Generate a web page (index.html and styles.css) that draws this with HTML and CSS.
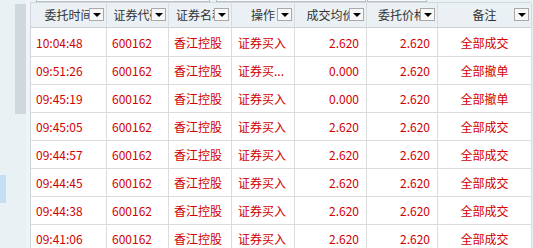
FILE: index.html
```html
<!DOCTYPE html>
<html>
<head>
<meta charset="utf-8">
<link rel="stylesheet" href="styles.css">
</head>
<body>
<div class="app">
  <div class="side">
    <div class="thumb"></div>
    <div class="marker"></div>
  </div>
  <div class="gutter"></div>
  <div class="main">
    <div class="toolbar">
      <div class="tb tb1"></div>
      <div class="tb tb2"></div>
      <div class="tb tb3"></div>
    </div>
    <div class="grid">
      <div class="h">委托时间<span class="dd"></span></div>
      <div class="h">证券代码<span class="dd"></span></div>
      <div class="h">证券名称<span class="dd"></span></div>
      <div class="h">操作<span class="dd"></span></div>
      <div class="h">成交均价<span class="dd"></span></div>
      <div class="h">委托价格<span class="dd"></span></div>
      <div class="h">备注<span class="dd"></span></div>

      <div class="c">10:04:48</div><div class="c">600162</div><div class="c">香江控股</div><div class="c op">证券买入</div><div class="c r">2.620</div><div class="c r">2.620</div><div class="c m">全部成交</div>
      <div class="c">09:51:26</div><div class="c">600162</div><div class="c">香江控股</div><div class="c op">证券买...</div><div class="c r">0.000</div><div class="c r">2.620</div><div class="c m">全部撤单</div>
      <div class="c">09:45:19</div><div class="c">600162</div><div class="c">香江控股</div><div class="c op">证券买入</div><div class="c r">0.000</div><div class="c r">2.620</div><div class="c m">全部撤单</div>
      <div class="c">09:45:05</div><div class="c">600162</div><div class="c">香江控股</div><div class="c op">证券买入</div><div class="c r">2.620</div><div class="c r">2.620</div><div class="c m">全部成交</div>
      <div class="c">09:44:57</div><div class="c">600162</div><div class="c">香江控股</div><div class="c op">证券买入</div><div class="c r">2.620</div><div class="c r">2.620</div><div class="c m">全部成交</div>
      <div class="c">09:44:45</div><div class="c">600162</div><div class="c">香江控股</div><div class="c op">证券买入</div><div class="c r">2.620</div><div class="c r">2.620</div><div class="c m">全部成交</div>
      <div class="c">09:44:38</div><div class="c">600162</div><div class="c">香江控股</div><div class="c op">证券买入</div><div class="c r">2.620</div><div class="c r">2.620</div><div class="c m">全部成交</div>
      <div class="c">09:41:06</div><div class="c">600162</div><div class="c">香江控股</div><div class="c op">证券买入</div><div class="c r">2.620</div><div class="c r">2.620</div><div class="c m">全部成交</div>
    </div>
  </div>
</div>
</body>
</html>
```
FILE: styles.css
```css
* { box-sizing: border-box; }
html, body { margin: 0; padding: 0; }
body {
  width: 533px;
  height: 248px;
  overflow: hidden;
  background: #eaf1f5;
  font-family: "Noto Sans CJK SC", "Noto Sans", sans-serif;
  font-size: 12px;
}
.app {
  display: flex;
  height: 248px;
}
.side {
  position: relative;
  width: 26px;
  flex: none;
  background: #e9f1f5;
}
.thumb {
  position: absolute;
  left: 15px;
  top: 4px;
  width: 11px;
  height: 110px;
  background: #cfd8dc;
}
.marker {
  position: absolute;
  left: 0;
  top: 175px;
  width: 6px;
  height: 28px;
  background: #c4dff4;
}
.gutter {
  width: 4px;
  flex: none;
  background: #f0f4f7;
}
.main {
  flex: none;
  width: 503px;
  display: flex;
  flex-direction: column;
}
.toolbar {
  height: 7px;
  display: flex;
  align-items: flex-start;
  background: #eaf1f5;
}
.tb {
  height: 2px;
  background: #fafbfc;
  border: 1px solid #b6bec6;
  border-top: none;
}
.tb1 { margin-left: 6px; width: 174px; }
.tb2 { margin-left: 6px; width: 150px; }
.tb3 { margin-left: 1px; width: 60px; }
.grid {
  display: grid;
  grid-template-columns: 76px 62px 63px 63px 72px 71px 94px;
  grid-template-rows: 25px 29px;
  grid-auto-rows: 28px;
  border-top: 1px solid #d3d9dd;
  border-left: 1px solid #cfd6db;
  width: 501px;
}
.h {
  position: relative;
  background: #eaf0f4;
  color: #333;
  text-align: center;
  line-height: 24px;
  white-space: nowrap;
  overflow: hidden;
  border-right: 1px solid #d6dde1;
  border-bottom: 1px solid #c9d1d6;
}
.dd {
  position: absolute;
  right: 2px;
  top: 5px;
  width: 15px;
  height: 13px;
  background: #f7f7f7;
  border: 1px solid #a9a9a9;
}
.dd::after {
  content: "";
  position: absolute;
  left: 3px;
  top: 4px;
  border-left: 4px solid transparent;
  border-right: 4px solid transparent;
  border-top: 4px solid #000;
}
.c {
  background: #fff;
  color: #d00000;
  white-space: nowrap;
  overflow: hidden;
  padding: 0 5px;
  display: flex;
  align-items: center;
  border-right: 1px solid #dcdcdc;
  border-bottom: 1px solid #dcdcdc;
}
.c.op { padding-left: 6px; }
.c.r { justify-content: flex-end; padding-right: 7px; }
.c.m { justify-content: center; }
```
